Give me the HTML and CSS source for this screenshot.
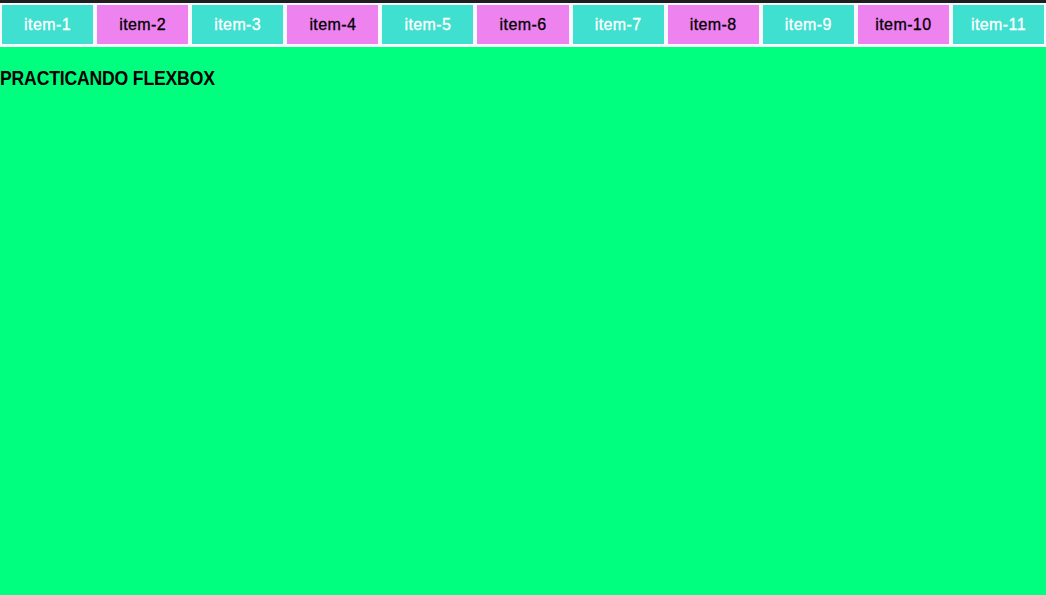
FILE: index.html
```html
<!DOCTYPE html>
<html lang="es">
<head>
    <meta charset="UTF-8">
    <meta name="viewport" content="width=device-width, initial-scale=1.0">
    <title>Flexbox</title>

    <link rel="stylesheet" href="styles.css">
</head>
<body>
    <div class="container">
        <div class="item">item-1</div>
        <div class="item">item-2</div>
        <div class="item">item-3</div>
        <div class="item">item-4</div>
        <div class="item">item-5</div>
        <div class="item">item-6</div>
        <div class="item">item-7</div>
        <div class="item">item-8</div>
        <div class="item">item-9</div>
        <div class="item">item-10</div>
        <div class="item">item-11</div>
    </div>

    <h2 class="title">PRACTICANDO FLEXBOX</h2>
</body>
</html>
```

FILE: styles.css
```css
html, body {
  height: 100%;
}

body {
  margin: 0;
  font-family: "Liberation Sans", Arial, sans-serif;
  background-color: springgreen;
}

.container {
  display: flex;
  background-color: ghostwhite;
  border-top: 3px solid #1e1e1e;
  padding-bottom: 1px;
}

.item {
  flex: 1;
  margin: 2px;
  height: 39px;
  line-height: 39px;
  text-align: center;
  font-size: 16px;
  letter-spacing: 0.4px;
  -webkit-text-stroke: 0.3px;
  background-color: turquoise;
  color: white;
}

.item:nth-child(even) {
  background-color: violet;
  color: black;
}

.title {
  display: inline-block;
  margin: 20px 0;
  font-size: 20px;
  letter-spacing: -0.2px;
  transform: scaleX(0.88);
  transform-origin: left center;
}
```
